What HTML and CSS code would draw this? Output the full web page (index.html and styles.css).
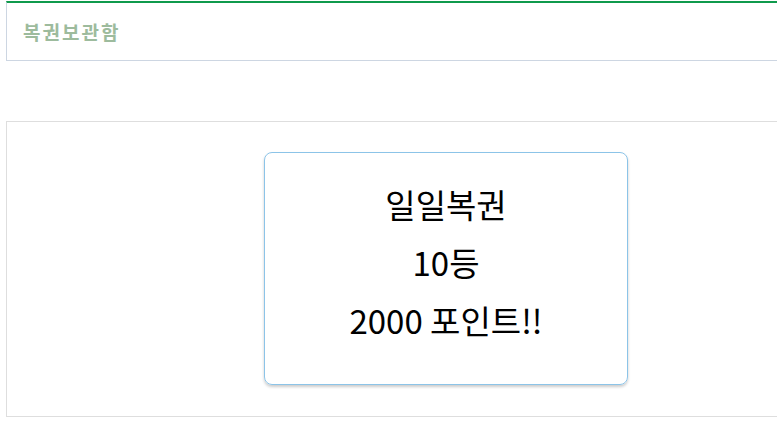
FILE: index.html
```html
<!DOCTYPE html>
<html>
<head>
    <title>복권보관함</title>
    <link rel="stylesheet" href="styles.css">
</head>
<body>
    <div class="wrap">
        <div class="box-header">
            <h3 class="box-title">복권보관함</h3>
        </div>

        <div class="box-body">
            <div class="lotto-card">
                <p>일일복권</p>
                <p>10등</p>
                <p>2000 포인트!!</p>
            </div>
        </div>
    </div>
</body>
</html>
```

FILE: styles.css
```css
body {
    font-family: "Noto Sans CJK KR", "Noto Sans", sans-serif;
    margin: 0;
    padding: 0;
    overflow: hidden;
    background: #fff;
}

.wrap {
    width: 800px;
    padding-left: 6px;
}

.box-header {
    margin-top: 1px;
    height: 57px;
    border-top: 2px solid #0f9a4c;
    border-left: 1px solid #cdd6e2;
    border-bottom: 1px solid #cdd6e2;
    display: flex;
    align-items: center;
    padding-left: 16px;
}

.box-title {
    margin: 0;
    font-size: 19px;
    font-weight: bold;
    letter-spacing: 2px;
    color: #9dbb9d;
}

.box-body {
    margin-top: 60px;
    height: 296px;
    border: 1px solid #dedede;
    padding: 30px 0 0 257px;
    box-sizing: border-box;
}

.lotto-card {
    width: 364px;
    height: 233px;
    border: 1px solid #8cc4e8;
    border-radius: 8px;
    box-shadow: 0 2px 3px rgba(0, 0, 0, 0.2);
    text-align: center;
    padding-top: 22px;
    box-sizing: border-box;
}

.lotto-card p {
    margin: 0;
    font-size: 33px;
    line-height: 58px;
    color: #000;
}
```
